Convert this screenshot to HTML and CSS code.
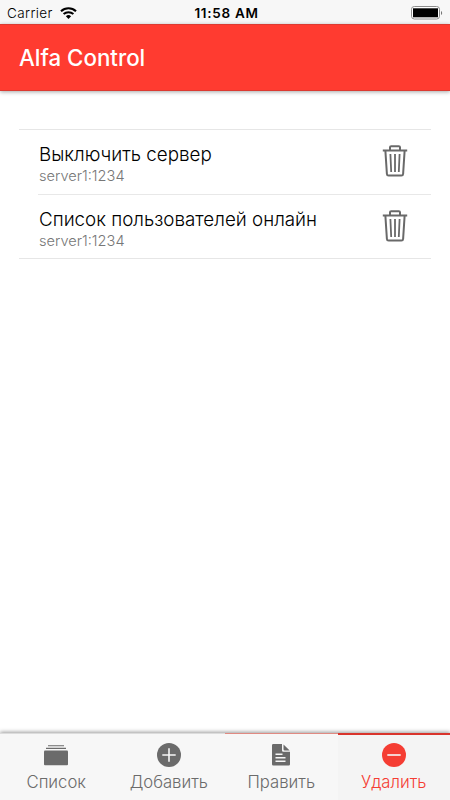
FILE: index.html
```
<!DOCTYPE html>
<html lang="ru">
<head>
    <meta charset="UTF-8">
    <meta name="viewport" content="width=device-width, initial-scale=1.0">
    <title>Alfa Control</title>
    <link rel="stylesheet" href="styles.css">
</head>
<body>

    <div class="status-bar">
        <div class="carrier">
            <span>Carrier</span>
            <svg class="wifi" viewBox="0 0 17 12">
                <path d="M1 4.2a11 11 0 0 1 15 0" fill="none" stroke="#000" stroke-width="2.1"/>
                <path d="M3.6 7.1a7.2 7.2 0 0 1 9.8 0" fill="none" stroke="#000" stroke-width="2"/>
                <path d="M8.5 12L5.9 9.3a3.8 3.8 0 0 1 5.2 0z" fill="#000"/>
            </svg>
        </div>
        <span class="time">11:58 AM</span>
        <div class="battery-wrap">
            <svg class="battery" viewBox="0 0 32 14">
                <rect x=".5" y=".5" width="28" height="12.5" rx="2.8" fill="#fff" stroke="#8c8c8c"/>
                <rect x="2" y="2.3" width="25" height="9" fill="#000"/>
                <path d="M30 5a2.3 2.3 0 0 1 0 4z" fill="#777"/>
            </svg>
        </div>
    </div>

    <header>
        <h1>Alfa Control</h1>
    </header>

    <main>
        <ul class="list">
            <li class="item">
                <div class="row">
                    <div>
                        <h2>Выключить сервер</h2>
                        <p>server1:1234</p>
                    </div>
                    <svg class="trash" viewBox="0 0 26 32">
                        <path d="M.8 5.4h24.4M8 5V2.3Q8 1.2 9.2 1.2h7.6q1.2 0 1.2 1.1V5M3.4 6l1.5 23q.1 1.6 1.7 1.6h12.8q1.6 0 1.7-1.6L22.6 6"/>
                        <path class="bars" d="M8.4 9l.8 18M13 9v18M17.6 9l-.8 18"/>
                    </svg>
                </div>
            </li>
            <li class="item">
                <div class="row">
                    <div>
                        <h2>Список пользователей онлайн</h2>
                        <p>server1:1234</p>
                    </div>
                    <svg class="trash" viewBox="0 0 26 32">
                        <path d="M.8 5.4h24.4M8 5V2.3Q8 1.2 9.2 1.2h7.6q1.2 0 1.2 1.1V5M3.4 6l1.5 23q.1 1.6 1.7 1.6h12.8q1.6 0 1.7-1.6L22.6 6"/>
                        <path class="bars" d="M8.4 9l.8 18M13 9v18M17.6 9l-.8 18"/>
                    </svg>
                </div>
            </li>
        </ul>
    </main>

    <nav class="tabs">
        <a class="tab">
            <svg viewBox="0 0 24 24">
                <path d="M4 2.2h16v1.1H4zM2 4.8h20v1.3H2z"/>
                <rect x="0" y="7.4" width="24" height="14.8" rx="1"/>
            </svg>
            <span>Список</span>
        </a>
        <a class="tab">
            <svg viewBox="0 0 24 24">
                <circle cx="12" cy="12" r="12"/>
                <path class="sign" d="M12 5.3v13.4M5.3 12h13.4"/>
            </svg>
            <span>Добавить</span>
        </a>
        <a class="tab leaving">
            <svg viewBox="0 0 24 24">
                <path d="M4.3 1H13v6.5q0 1.3 1.3 1.3H21v12.4q0 1.3-1.3 1.3H4.3Q3 22.5 3 21.2V2.3Q3 1 4.3 1z"/>
                <path d="M14.5 1.5L20.7 7.5h-5q-1.2 0-1.2-1.2z"/>
                <path class="lines" d="M6.5 11.2h7M6.5 14.7h10M6.5 18.2h10"/>
            </svg>
            <span>Править</span>
        </a>
        <a class="tab active">
            <svg viewBox="0 0 24 24">
                <circle cx="12" cy="12" r="12"/>
                <path class="sign" d="M5.3 12h13.4"/>
            </svg>
            <span>Удалить</span>
        </a>
    </nav>

</body>
</html>
```

FILE: styles.css
```
* {
    margin: 0;
    padding: 0;
    box-sizing: border-box;
}

body {
    display: flex;
    flex-direction: column;
    height: 100vh;
    overflow: hidden;
    background: #fff;
    color: #000;
    font-family: Inter, "Liberation Sans", sans-serif;
}

.status-bar {
    display: grid;
    grid-template-columns: 1fr auto 1fr;
    align-items: center;
    height: 24px;
    padding: 1px 7px 0;
    background: #f7f7f7;
    font-size: 13.5px;
    font-weight: 350;
}

.carrier {
    display: flex;
    align-items: center;
    gap: 7px;
    letter-spacing: 0.4px;
}

.wifi {
    width: 17px;
    height: 12px;
}

.time {
    padding-left: 3px;
    font-size: 13.5px;
    font-weight: 600;
    letter-spacing: 0.7px;
}

.battery-wrap {
    display: flex;
    justify-content: flex-end;
}

.battery {
    width: 32px;
    height: 14px;
}

header {
    display: flex;
    align-items: center;
    height: 67px;
    padding: 0 19px;
    background: #ff3b30;
    border-top: 1px solid #dc3a31;
    border-bottom: 1px solid #dc3a31;
    box-shadow: 0 1px 4px rgba(0, 0, 0, 0.35);
}

h1 {
    color: #fff;
    font-size: 22.3px;
    font-weight: 450;
}

main {
    flex: 1;
    padding: 38px 19px;
}

.list {
    list-style: none;
    border-top: 1px solid #e6e6e6;
    border-bottom: 1px solid #e6e6e6;
}

.item {
    padding-left: 19px;
}

.row {
    display: flex;
    align-items: flex-start;
    justify-content: space-between;
    height: 64px;
    padding: 13px 23px 0 1px;
}

.item + .item .row {
    border-top: 1px solid #e8e8e8;
}

h2 {
    font-size: 18.8px;
    font-weight: 350;
    line-height: 24px;
}

.row p {
    color: #777;
    font-size: 14.6px;
    font-weight: 350;
    line-height: 19px;
}

.trash {
    width: 26px;
    height: 32px;
    margin-top: 2px;
    fill: none;
    stroke: #696969;
    stroke-width: 2;
}

.trash .bars {
    stroke-width: 1.8;
}

.tabs {
    display: flex;
    height: 67px;
    background: #f7f7f7;
    box-shadow: 0 -1px 4px rgba(0, 0, 0, 0.4);
}

.tab {
    flex: 1;
    display: flex;
    flex-direction: column;
    align-items: center;
    padding-top: 9px;
    border-top: 1px solid #dcdcdc;
    color: #6b6b6b;
    font-size: 16.7px;
}

.tab svg {
    width: 24px;
    height: 24px;
    margin-bottom: 5px;
    fill: currentColor;
}

.tab span {
    font-weight: 350;
}

.tab .sign {
    stroke: #f7f7f7;
    stroke-width: 1.6;
}

.tab .lines {
    stroke: #f7f7f7;
    stroke-width: 1.5;
}

.tab.leaving {
    border-top-color: #e08a82;
}

.tab.active {
    padding-top: 8px;
    background: #f4f4f4;
    border-top: 2px solid #d9342c;
    color: #f53d33;
}
```
